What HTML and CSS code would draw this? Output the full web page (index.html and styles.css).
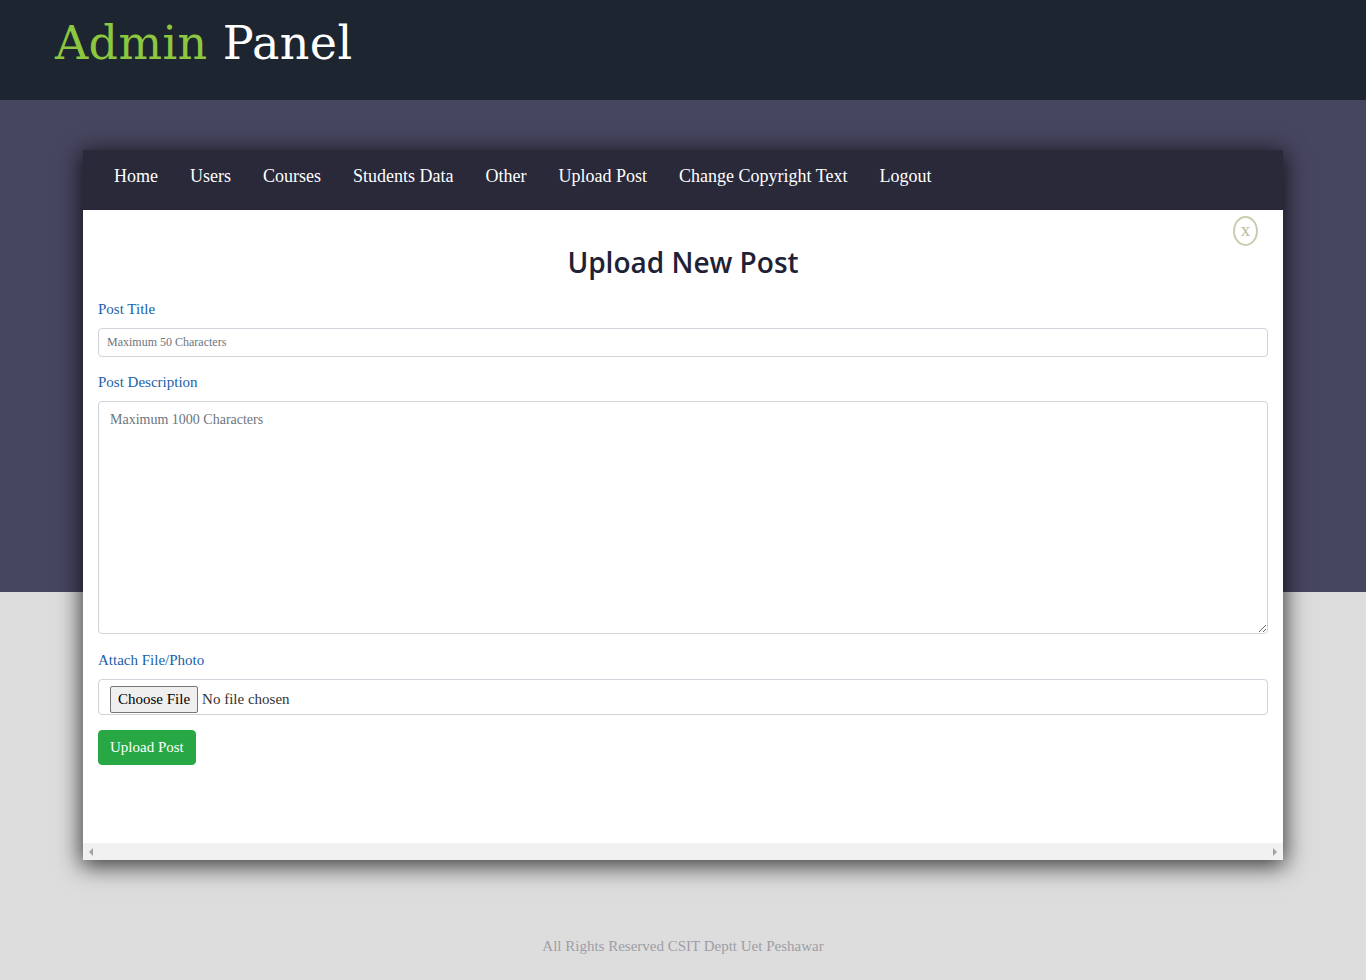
FILE: index.html
```html
<!DOCTYPE html>
<html>
<head>
<meta charset="utf-8">
<title>Admin Panel</title>
<link rel="stylesheet" href="styles.css">
</head>
<body>
<header class="top">
  <h1 class="brand"><span class="brand-green">Admin</span> Panel</h1>
</header>
<main class="stage">
  <section class="card">
    <nav class="nav">
      <a class="nav-link" href="#">Home</a>
      <a class="nav-link" href="#">Users</a>
      <a class="nav-link" href="#">Courses</a>
      <a class="nav-link" href="#">Students Data</a>
      <a class="nav-link" href="#">Other</a>
      <a class="nav-link" href="#">Upload Post</a>
      <a class="nav-link" href="#">Change Copyright Text</a>
      <a class="nav-link" href="#">Logout</a>
    </nav>
    <div class="card-body">
      <button class="close-btn" type="button">x</button>
      <h2 class="title">Upload New Post</h2>
      <form class="form">
        <div class="group">
          <label class="label" for="pt">Post Title</label>
          <input class="control control-sm" id="pt" type="text" placeholder="Maximum 50 Characters">
        </div>
        <div class="group">
          <label class="label" for="pd">Post Description</label>
          <textarea class="control control-area" id="pd" placeholder="Maximum 1000 Characters"></textarea>
        </div>
        <div class="group">
          <label class="label" for="pf">Attach File/Photo</label>
          <input class="control control-file" id="pf" type="file">
        </div>
        <button class="submit" type="button">Upload Post</button>
      </form>
    </div>
    <div class="hscroll">
      <span class="arrow arrow-left"></span>
      <span class="arrow arrow-right"></span>
    </div>
  </section>
  <footer class="footer">All Rights Reserved CSIT Deptt Uet Peshawar</footer>
</main>
</body>
</html>
```

FILE: styles.css
```css
html, body {
  margin: 0;
  padding: 0;
}
body {
  background: #dddddd;
  font-family: "Liberation Serif", "Times New Roman", serif;
  height: 980px;
  overflow: hidden;
}
.top {
  height: 100px;
  background: #1c2530;
  box-sizing: border-box;
  padding: 20px 0 0 55px;
}
.brand {
  margin: 0;
  font-family: "DejaVu Serif", serif;
  font-weight: normal;
  font-size: 46px;
  line-height: 46px;
  color: #ffffff;
  letter-spacing: 0.4px;
}
.brand-green {
  color: #8dc63f;
}
.stage {
  background: linear-gradient(to bottom, #474660 0, #474660 492px, #dddddd 492px);
  padding-top: 50px;
  height: 880px;
  box-sizing: border-box;
}
.card {
  width: 1200px;
  margin: 0 auto;
  background: #ffffff;
  box-shadow: 0 4px 22px 2px rgba(0, 0, 0, 0.75);
}
.nav {
  height: 60px;
  background: #292939;
  box-sizing: border-box;
  padding: 0 0 8px 15px;
  display: flex;
}
.nav-link {
  color: #ffffff;
  text-decoration: none;
  font-size: 18px;
  line-height: 53px;
  padding: 0 16px;
}
.card-body {
  position: relative;
  height: 633px;
  box-sizing: border-box;
  padding: 35px 15px 0 15px;
  overflow: hidden;
}
.close-btn {
  position: absolute;
  top: 6px;
  right: 25px;
  width: 25px;
  height: 30px;
  border: 2px solid #cbcbad;
  border-radius: 50%;
  background: transparent;
  color: #b9b9a0;
  font-family: "Liberation Serif", serif;
  font-size: 19px;
  line-height: 22px;
  padding: 0 0 3px 0;
}
.title {
  margin: 0;
  text-align: center;
  font-family: "Open Sans", sans-serif;
  font-weight: 600;
  font-size: 28px;
  line-height: 34px;
  color: #1f2235;
}
.form {
  padding-top: 22px;
}
.group {
  margin-bottom: 17.6px;
}
.group:first-child {
  margin-bottom: 17px;
}
.label {
  display: block;
  font-size: 15px;
  line-height: 17px;
  color: #1c5fa8;
  margin-bottom: 10px;
}
.control {
  display: block;
  width: 100%;
  box-sizing: border-box;
  border: 1px solid #ced4da;
  border-radius: 4px;
  background: #ffffff;
  font-family: "Liberation Serif", serif;
  color: #495057;
  margin: 0;
}
.control::placeholder {
  color: #6c757d;
  opacity: 1;
}
.control-sm {
  height: 29px;
  font-size: 12px;
  padding: 0 8px;
}
.control-area {
  height: 233px;
  font-size: 14px;
  line-height: 16px;
  padding: 10px 11px;
  resize: vertical;
}
.control-file {
  height: 36px;
  font-size: 15px;
  padding: 6px 11px 0 11px;
  color: #333333;
}
.control-file::file-selector-button {
  font-family: "Liberation Serif", serif;
  font-size: 15px;
  line-height: 17px;
  color: #000000;
  background: #efefef;
  border: 1px solid #767676;
  border-radius: 2px;
  padding: 4px 7px;
  margin-right: 4px;
}
.submit {
  margin-top: -2px;
  height: 35px;
  padding: 0 11px;
  background: #28a745;
  border: 1px solid #28a745;
  border-radius: 4px;
  color: #ffffff;
  font-family: "Liberation Serif", serif;
  font-size: 15px;
}
.hscroll {
  height: 17px;
  background: #f1f1f1;
  display: flex;
  justify-content: space-between;
  align-items: center;
  padding: 0 6px;
}
.arrow {
  width: 0;
  height: 0;
  border-top: 4px solid transparent;
  border-bottom: 4px solid transparent;
}
.arrow-left {
  border-right: 4px solid #a3a3a3;
}
.arrow-right {
  border-left: 4px solid #a3a3a3;
}
.footer {
  text-align: center;
  margin-top: 78px;
  font-size: 15px;
  line-height: 17px;
  color: #9d9da6;
}
```
